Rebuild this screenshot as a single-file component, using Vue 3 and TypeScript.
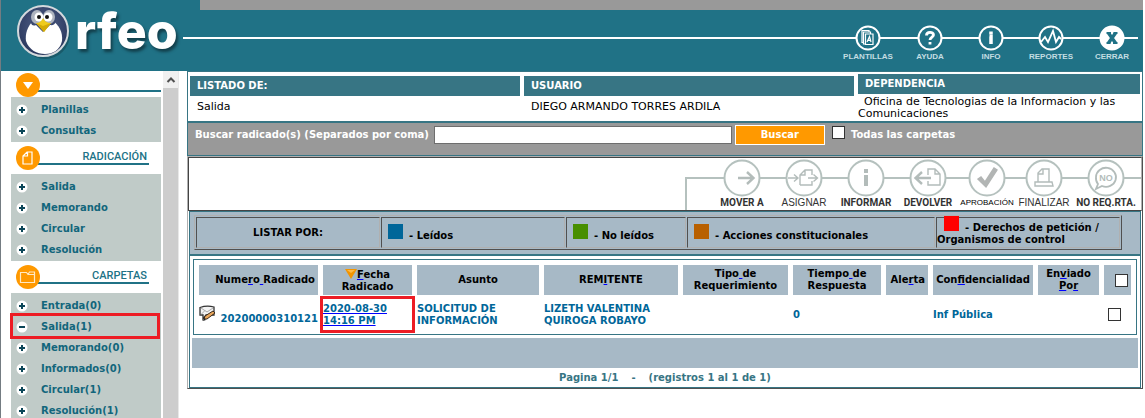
<script setup lang="ts">
import { ref } from 'vue'

interface Segment { text: string; marked: boolean }
interface Column { key: string; width: number; lines: string[]; sorted?: boolean; align?: string }

const topLinks = [
  { id: 'plantillas', label: 'PLANTILLAS' },
  { id: 'ayuda', label: 'AYUDA' },
  { id: 'info', label: 'INFO' },
  { id: 'reportes', label: 'REPORTES' },
  { id: 'cerrar', label: 'CERRAR' },
]

const menus = [
  { id: 'general', title: '', items: ['Planillas', 'Consultas'] },
  { id: 'radicacion', title: 'RADICACIÓN', items: ['Salida', 'Memorando', 'Circular', 'Resolución'] },
  {
    id: 'carpetas',
    title: 'CARPETAS',
    items: ['Entrada(0)', 'Salida(1)', 'Memorando(0)', 'Informados(0)', 'Circular(1)', 'Resolución(1)'],
  },
]
const currentFolder = 'Salida(1)'

const actions = [
  { id: 'mover', label: 'MOVER A' },
  { id: 'asignar', label: 'ASIGNAR' },
  { id: 'informar', label: 'INFORMAR' },
  { id: 'devolver', label: 'DEVOLVER' },
  { id: 'aprobacion', label: 'APROBACIÓN' },
  { id: 'finalizar', label: 'FINALIZAR' },
  { id: 'noreq', label: 'NO REQ.RTA.' },
]

const legend = [
  { id: 'leidos', label: '- Leídos' },
  { id: 'noleidos', label: '- No leídos' },
  { id: 'acciones', label: '- Acciones constitucionales' },
  { id: 'derechos', label: '- Derechos de petición / Organismos de control' },
]

// Square brackets mark the underlined part of a heading.
const columns: Column[] = [
  { key: 'numero', width: 119, lines: ['Nume[r]o[ ]Radicado'], align: 'end' },
  { key: 'fecha', width: 89, lines: ['[F]echa', 'Radicado'], sorted: true },
  { key: 'asunto', width: 122, lines: ['Asunto'] },
  { key: 'remitente', width: 134, lines: ['REM[I]TENTE'] },
  { key: 'tipo', width: 105, lines: ['Tipo[ ]de', 'Requerimiento'] },
  { key: 'tiempo', width: 88, lines: ['Tiempo[ ]de', 'Respuesta'] },
  { key: 'alerta', width: 42, lines: ['Ale[r]ta'], align: 'end' },
  { key: 'confidencialidad', width: 100, lines: ['Con[f]idencialidad'], align: 'end' },
  { key: 'enviado', width: 61, lines: ['En[v]iado', '[P]o[r]'] },
]

function segments(line: string): Segment[] {
  return line
    .split(/(\[[^\]]+\])/)
    .filter((part) => part.length > 0)
    .map((part) => ({
      text: (part.startsWith('[') ? part.slice(1, -1) : part).replace(/ /g, '\u00a0'),
      marked: part.startsWith('['),
    }))
}

const query = ref('')
const allFolders = ref(false)
const selectAll = ref(false)
const selected = ref(false)
</script>

<template>
  <div class="page">
    <header class="top">
      <div class="brand">
        <svg class="penguin" viewBox="0 0 54 54" role="img" aria-label="O">
          <defs>
            <radialGradient id="coat" cx="50%" cy="40%" r="60%">
              <stop offset="0" stop-color="#56658c" />
              <stop offset="1" stop-color="#29365c" />
            </radialGradient>
          </defs>
          <circle cx="28" cy="29" r="25" fill="#12414d" opacity="0.5" />
          <circle cx="26" cy="26" r="25" fill="url(#coat)" stroke="#d4d9dd" stroke-width="2" />
          <path d="M17 15 C10 21 8 30 9 36 C12 45 20 49 28 49 C36 49 43 45 45 36 C46 27 42 20 35 15 Z" fill="#fff" />
          <path d="M15 12 C12 18 15 22 19 20 L26 27 L33 20 C38 21 40 17 38 11 C35 3 18 3 15 12 Z" fill="#3b4970" />
          <ellipse cx="20" cy="12" rx="6" ry="7" fill="#aeb4bf" />
          <ellipse cx="32" cy="12" rx="6" ry="7" fill="#aeb4bf" />
          <circle cx="22" cy="12" r="4.500" fill="#fff" />
          <circle cx="31" cy="12" r="4.500" fill="#fff" />
          <circle cx="22" cy="12" r="2" fill="#111" />
          <circle cx="30" cy="12" r="2" fill="#111" />
          <path d="M19 18 Q24 18 26 13 Q28 18 34 18 L27 27 Z" fill="#efcb1e" />
          <path d="M19 18 L26 21 L34 18 L27 27 Z" fill="#d3aa08" />
        </svg>
        <span class="wordmark">rfeo</span>
      </div>
      <nav class="top-nav">
        <a v-for="link in topLinks" :key="link.id" href="#" class="top-link" :class="link.id">
          <svg viewBox="0 0 26 26" aria-hidden="true">
            <circle cx="13" cy="13" r="11.500" :fill="link.id === 'cerrar' ? '#fff' : '#207286'" stroke="#fff" stroke-width="2" />
            <g v-if="link.id === 'plantillas'" fill="#207286" stroke="#fff" stroke-width="1.200">
              <path d="M7 5.500h7v12H7z" />
              <path d="M8.500 7h7v12h-7z" />
              <path d="M10.500 9h7.500v10.500h-7.500z" />
              <path d="M12 17l2.500-5.500 1.500 5.500M12.800 15.300h3" fill="none" />
            </g>
            <path v-else-if="link.id === 'ayuda'" d="M9.500 10.500C9.500 6.500 16.500 6.500 16.500 10C16.500 12 13 12.300 13 15M13 17v2.500" fill="none" stroke="#fff" stroke-width="2.800" />
            <path v-else-if="link.id === 'info'" d="M13 6.500v3M11.500 11.500h1.500v7.500" fill="none" stroke="#fff" stroke-width="3.500" />
            <path v-else-if="link.id === 'reportes'" d="M3 17l4-5 3 5 5-11 3 11 3-5 2 2" fill="none" stroke="#fff" stroke-width="1.800" />
            <g v-else fill="none" stroke="#207286">
              <path d="M9.500 8l7 10M16.500 8l-7 10" stroke-width="3.400" />
              <path d="M7.500 8h4.500M14.500 8h4M7.500 18h4M14 18h4.500" stroke-width="2" />
            </g>
          </svg>
          <span>{{ link.label }}</span>
        </a>
      </nav>
    </header>

    <div class="body">
      <aside class="sidebar">
        <nav class="menus">
          <section v-for="menu in menus" :key="menu.id" class="menu">
            <h2 class="menu-head" :class="menu.id">
              <svg viewBox="0 0 24 24" aria-hidden="true">
                <circle cx="12" cy="12" r="12" fill="#ff9900" />
                <path v-if="menu.id === 'general'" d="M7 9h10l-5 7z" fill="#fff" />
                <path v-else-if="menu.id === 'radicacion'" d="M11 6h5v12H7V10zM11.500 6v4H7" fill="none" stroke="#fff" stroke-width="1.200" />
                <path v-else d="M4.500 7.500h6l1.500 2h6.500v8h-14zM12 9.500l1.500-2.500h5v2.500" fill="none" stroke="#ffe9c4" stroke-width="1.200" />
              </svg>
              <span class="menu-title">{{ menu.title }}</span>
            </h2>
            <ul>
              <li v-for="item in menu.items" :key="item" :class="{ current: menu.id === 'carpetas' && item === currentFolder }">
                <svg viewBox="0 0 12 12" aria-hidden="true">
                  <circle cx="6" cy="6" r="5.500" fill="#fff" />
                  <path d="M3 6h6" stroke="#0b4658" stroke-width="2" />
                  <path v-if="item !== currentFolder" d="M6 3v6" stroke="#0b4658" stroke-width="2" />
                </svg>
                <a href="#">{{ item }}</a>
              </li>
            </ul>
          </section>
        </nav>
        <div class="scroll-track" aria-hidden="true">
          <div class="scroll-up">
            <svg viewBox="0 0 10 6"><path d="M1.500 5L5 1.500 8.500 5" fill="none" stroke="#505050" stroke-width="2" /></svg>
          </div>
        </div>
      </aside>

      <main class="main">
        <section class="context">
          <dl>
            <div><dt>LISTADO DE:</dt><dd>Salida</dd></div>
            <div><dt>USUARIO</dt><dd>DIEGO ARMANDO TORRES ARDILA</dd></div>
            <div class="office"><dt>DEPENDENCIA</dt><dd>Oficina de Tecnologias de la Informacion y las Comunicaciones</dd></div>
          </dl>
          <form class="search" @submit.prevent>
            <label for="query">Buscar radicado(s) (Separados por coma)</label>
            <input id="query" v-model="query" type="text" />
            <button type="submit">Buscar</button>
            <input id="all-folders" v-model="allFolders" type="checkbox" />
            <label for="all-folders">Todas las carpetas</label>
          </form>
        </section>

        <section class="panel">
          <div class="toolbar">
            <div class="actions">
              <button v-for="action in actions" :key="action.id" type="button" class="action" :class="action.id">
                <svg viewBox="0 0 38 38" aria-hidden="true">
                  <circle cx="19" cy="19" r="17.500" fill="#fff" stroke="#b5c1be" stroke-width="2" />
                  <g fill="none" stroke="#b3bcba" stroke-width="1.400">
                    <path v-if="action.id === 'mover'" d="M15 19h15M24 13l6.500 6-6.500 6" stroke-width="2.400" />
                    <path v-else-if="action.id === 'asignar'" d="M3 19h10M9 15.500l4 3.500-4 3.500M15 26V16l5-5h7v5M15 26h12v-4M15 16h5v-5M23 19h9M28.500 15.500l4 3.500-4 3.500" />
                    <path v-else-if="action.id === 'informar'" d="M19 10v4M19 16v11" stroke-width="4" />
                    <g v-else-if="action.id === 'devolver'">
                      <path d="M7 19h15M13 13l-6.500 6 6.500 6" stroke-width="2.400" />
                      <path d="M19 16v-6h7l5 5v11H19v-4M26 10v5h5" />
                    </g>
                    <path v-else-if="action.id === 'aprobacion'" d="M10 20l3-2 4 5L26 9l3 2-11 17z" fill="#b2b5b4" stroke="#b2b5b4" />
                    <path v-else-if="action.id === 'finalizar'" d="M13 23V14l4-4h7v13M13 15h5v-5M10 23h17l1 4H10z" />
                    <path v-else d="M9 18a10 9.500 0 1 1 6 9l-6 3 2-5a10 9.500 0 0 1-2-7z" stroke-width="1.800" />
                  </g>
                  <text v-if="action.id === 'noreq'" x="19" y="22" text-anchor="middle" class="no">NO</text>
                </svg>
                <span>{{ action.label }}</span>
              </button>
            </div>
          </div>

          <div class="legend">
            <table>
              <colgroup>
                <col class="wide" /><col class="wide" /><col class="small" /><col class="big" /><col class="wide" />
              </colgroup>
              <tbody>
                <tr>
                  <th scope="row">LISTAR POR:</th>
                  <td v-for="entry in legend" :key="entry.id" :class="entry.id"><i class="swatch" />{{ entry.label }}</td>
                </tr>
              </tbody>
            </table>
          </div>

          <div class="results">
            <table class="list">
              <colgroup>
                <col v-for="column in columns" :key="column.key" :style="{ width: column.width + 'px' }" />
                <col class="check-col" />
              </colgroup>
              <thead>
                <tr>
                  <th v-for="column in columns" :key="column.key" scope="col" :class="column.align">
                    <a href="#">
                      <span v-for="(line, n) in column.lines" :key="n" class="line">
                        <svg v-if="column.sorted && n === 0" class="sort" viewBox="0 0 12 11" aria-hidden="true">
                          <path d="M0 1h12L6 11z" fill="#f29400" /><path d="M2 2h8L6 5z" fill="#ffba45" />
                        </svg><span v-for="(part, m) in segments(line)" :key="m" :class="{ mark: part.marked }">{{ part.text }}</span>
                      </span>
                    </a>
                  </th>
                  <th scope="col" class="end"><input v-model="selectAll" type="checkbox" aria-label="Seleccionar todos" /></th>
                </tr>
              </thead>
              <tbody>
                <tr>
                  <td>
                    <div class="number">
                      <svg viewBox="0 0 17 17" aria-hidden="true">
                        <path d="M1 2.500Q8 0 15 2v8H7l-3 4v-4H1z" fill="#f4f4f4" stroke="#333" stroke-width="1.300" />
                        <path d="M2 3l6 4 6-4M2 9.500l4-4" fill="none" stroke="#aaa" />
                        <path d="M5 14l1-3 8-5 2 2-8 6z" fill="#e8a55a" stroke="#3a2a1c" />
                        <path d="M4 16l1-3 2 2z" fill="#222" />
                      </svg>
                      <span>20200000310121</span>
                    </div>
                  </td>
                  <td class="date"><a href="#">2020-08-30 14:16 PM</a></td>
                  <td>SOLICITUD DE INFORMACIÓN</td>
                  <td>LIZETH VALENTINA QUIROGA ROBAYO</td>
                  <td></td>
                  <td>0</td>
                  <td></td>
                  <td>Inf Pública</td>
                  <td></td>
                  <td class="row-check"><input v-model="selected" type="checkbox" aria-label="Seleccionar 20200000310121" /></td>
                </tr>
              </tbody>
            </table>
            <div class="band"></div>
            <p class="pages"><span>Pagina 1/1</span><span>-</span><span>(registros 1 al 1 de 1)</span></p>
          </div>
        </section>
      </main>
    </div>
  </div>
</template>

<style>
body {
  background: #fff;
}
</style>

<style scoped>
* {
  box-sizing: border-box;
}

.page {
  display: flex;
  flex-direction: column;
  height: 100vh;
  padding-right: 2px;
  border-left: 1px solid #747c82;
  font-family: Verdana, "DejaVu Sans", sans-serif;
  font-size: 10px;
  line-height: 12px;
  overflow: hidden;
}

a {
  color: inherit;
  text-decoration: none;
}

button {
  font: inherit;
  cursor: pointer;
}

input[type='checkbox'] {
  appearance: none;
  flex: none;
  width: 13px;
  height: 13px;
  margin: 0;
  border: 1px solid #333;
  background: #fff;
  vertical-align: middle;
}

input[type='checkbox']:checked {
  background: #207286;
  box-shadow: inset 0 0 0 2px #fff;
}

/* Header */
.top {
  display: flex;
  flex: none;
  justify-content: space-between;
  height: 71px;
  background:
    linear-gradient(#999, #999) 199px 0 / 100% 10px no-repeat,
    linear-gradient(#fff, #fff) 182px 37px / calc(100% - 187px) 2px no-repeat,
    #207286;
}

.brand {
  display: flex;
  align-items: flex-start;
  padding: 1px 0 0 16px;
}

.penguin {
  width: 54px;
  height: 54px;
  margin-top: 4px;
}

.wordmark {
  margin-left: 4px;
  color: #fff;
  font: 800 50px/60px Inter, sans-serif;
  text-shadow: 2px 3px 3px #123f4b;
}

.top-nav {
  display: flex;
  padding-top: 25px;
}

.top-link {
  display: flex;
  flex-direction: column;
  align-items: center;
  gap: 1px;
  width: 62px;
  color: #c3dde2;
  font: bold 8px/10px "Liberation Sans", Arial, sans-serif;
}

.top-link.info,
.top-link.reportes {
  width: 60px;
}

.top-link svg {
  width: 26px;
  height: 26px;
}

/* Sidebar */
.body {
  display: flex;
  flex: 1;
  min-height: 0;
}

.sidebar {
  display: flex;
  flex: none;
  width: 178px;
  margin-right: 8px;
  overflow: hidden;
}

.menus {
  flex: 1;
  padding: 0 2px 0 10px;
}

.menu-head {
  display: flex;
  align-items: flex-start;
  height: 32px;
  margin: 0;
  padding: 4px 12px 0 5px;
  color: #207286;
  font: 500 11px/22px Roboto, sans-serif;
}

.menu-head.general {
  height: 26px;
  padding: 2px 0 0 5px;
}

.menu-head svg {
  z-index: 1;
  width: 24px;
  height: 24px;
}

.menu-title {
  flex: 1;
  height: 19px;
  margin-left: -2px;
  padding-right: 2px;
  border-bottom: 2px solid #207286;
  text-align: right;
}

.menu ul {
  margin: 0;
  padding: 2px 0 1px;
  background: #c0cbc8;
  list-style: none;
}

.menu li {
  display: flex;
  position: relative;
  align-items: center;
  gap: 13px;
  height: 21px;
  padding-left: 5px;
  color: #12667c;
  font-weight: bold;
}

.menu li svg {
  width: 12px;
  height: 12px;
}

.menu li.current::after {
  position: absolute;
  inset: -3px 1px -2px -1px;
  border: 3px solid #ed1c24;
  content: '';
}

.scroll-track {
  width: 16px;
  border-right: 1px solid #e8e8e8;
  background: #cdcdcd;
}

.scroll-up {
  display: flex;
  align-items: center;
  justify-content: center;
  height: 17px;
  background: #f0f0f0;
}

.scroll-up svg {
  width: 10px;
  height: 6px;
}

/* Main column */
.main {
  flex: 1;
  min-width: 0;
}

.context {
  border: 1px solid #377584;
}

dl {
  display: grid;
  grid-template-columns: 330fr 330fr 282fr;
  gap: 4px;
  margin: 0;
  padding: 2px 2px 0;
  border-bottom: 2px solid #377584;
}

dl > div {
  min-height: 47px;
  padding-top: 2px;
}

dt {
  padding: 0 7px;
  background: #377584;
  color: #fff;
  font-weight: bold;
  line-height: 20px;
}

dd {
  margin: 0;
  padding: 5px 7px;
  color: #000;
  font-size: 11px;
}

dl > .office {
  padding-top: 0;
}

.office dd {
  padding: 2px 0 0;
  text-indent: 6px;
}

.search {
  display: flex;
  align-items: flex-start;
  height: 32px;
  padding: 2px 7px 0;
  background: #999;
  color: #fff;
  font-weight: bold;
}

.search label {
  line-height: 20px;
}

.search input[type='text'] {
  width: 298px;
  height: 18px;
  margin: 1px 3px 0 5px;
  padding: 0 2px;
  border: 1px solid #6e6e6e;
  background: #fff;
  font: inherit;
}

.search button {
  width: 90px;
  height: 20px;
  margin-right: 7px;
  padding: 0;
  border: 1px solid #fff;
  background: #ff9900;
  color: #fff;
  font-weight: bold;
}

.search input[type='checkbox'] {
  margin: 1px 6px 0 0;
}

.panel {
  border: 1px solid #b0b0b0;
  border-right-color: #505050;
  border-bottom-color: #505050;
}

/* Toolbar */
.toolbar {
  display: flex;
  justify-content: flex-end;
  border: 1px solid #444;
  border-right-color: #b0b0b0;
  border-bottom-color: #444;
  background: #fff;
}

.actions {
  display: flex;
  height: 52px;
  padding: 1px 2px 0 26px;
  background:
    linear-gradient(#b5c1be, #b5c1be) 0 19px / 100% 2px no-repeat,
    linear-gradient(#b5c1be, #b5c1be) 0 19px / 2px 100% no-repeat;
}

.action {
  display: flex;
  flex-direction: column;
  align-items: center;
  width: 62px;
  padding: 0;
  border: 0;
  background: none;
  color: #333;
  font: bold 10px/12px Roboto, sans-serif;
  white-space: nowrap;
}

.action svg {
  flex: none;
  width: 38px;
  height: 38px;
}

.action.aprobacion {
  width: 56px;
  color: #000;
  font: 8px/12px "Liberation Sans", Arial, sans-serif;
}

.action.asignar,
.action.finalizar {
  font: 10px/12px "Liberation Sans", Arial, sans-serif;
}

.action.finalizar {
  width: 58px;
}

.action.noreq {
  width: 66px;
}

.no {
  fill: #b3bcba;
  font: bold 9px "Liberation Sans", Arial, sans-serif;
}

/* Colour key */
.legend {
  margin: 0 1px;
  padding: 3px 19px 4px 4px;
  border: 1px solid #377584;
  border-bottom-width: 2px;
  background: #a7b9c6;
}

.legend table {
  width: 100%;
  border: 1px solid #b0b0b0;
  border-right-color: #505050;
  border-bottom-color: #505050;
  border-spacing: 1px;
  table-layout: fixed;
}

.legend .wide {
  width: 184px;
}

.legend .small {
  width: 120px;
}

.legend .big {
  width: 248px;
}

.legend th,
.legend td {
  height: 31px;
  padding: 0 6px;
  border: 1px solid #505050;
  border-right-color: #b0b0b0;
  border-bottom-color: #b0b0b0;
  font-weight: bold;
  text-align: left;
}

.legend th {
  text-align: center;
}

.legend td.derechos {
  padding: 0;
}

.swatch {
  display: inline-block;
  width: 15px;
  height: 15px;
  margin-right: 6px;
  background: #006699;
}

.noleidos .swatch {
  background: #488f00;
}

.acciones .swatch {
  background: #b86000;
}

.derechos .swatch {
  margin: -4px 6px 0 7px;
  background: #f00;
}

/* Results */
.results {
  margin: 0 1px;
  padding: 3px 2px 0;
  border: 1px solid #377584;
  border-top: 0;
}

.list {
  width: calc(100% - 2px);
  margin: 0 1px;
  border: 1px solid #377584;
  border-spacing: 5px;
  table-layout: fixed;
}

.check-col {
  width: 27px;
}

.list th {
  height: 30px;
  padding: 0;
  background: #a7b9c6;
  color: #000;
}

.list th.end {
  padding-right: 3px;
  text-align: right;
}

.list .line {
  display: block;
  white-space: nowrap;
}

.list .mark {
  text-decoration: underline;
  text-decoration-color: #00f;
  text-decoration-skip-ink: none;
}

.sort {
  width: 12px;
  height: 11px;
  vertical-align: -1px;
}

.list td {
  height: 29px;
  padding: 0;
  color: #006699;
  font-weight: bold;
}

.number {
  display: flex;
  justify-content: space-between;
}

.number svg {
  flex: none;
  width: 17px;
  height: 17px;
}

.number span {
  padding-top: 8px;
}

.date {
  position: relative;
}

.date a {
  display: block;
  text-decoration: underline;
  text-decoration-color: #00f;
}

.date::after {
  position: absolute;
  inset: -4px -3px;
  border: 3px solid #ed1c24;
  content: '';
  pointer-events: none;
}

.list .row-check {
  padding-left: 4px;
}

.band {
  height: 30px;
  margin-top: 3px;
  background: #a7b9c6;
}

.pages {
  display: flex;
  justify-content: center;
  gap: 13px;
  margin: 0;
  padding: 4px 0 3px;
  color: #377584;
  font-weight: bold;
}
</style>
